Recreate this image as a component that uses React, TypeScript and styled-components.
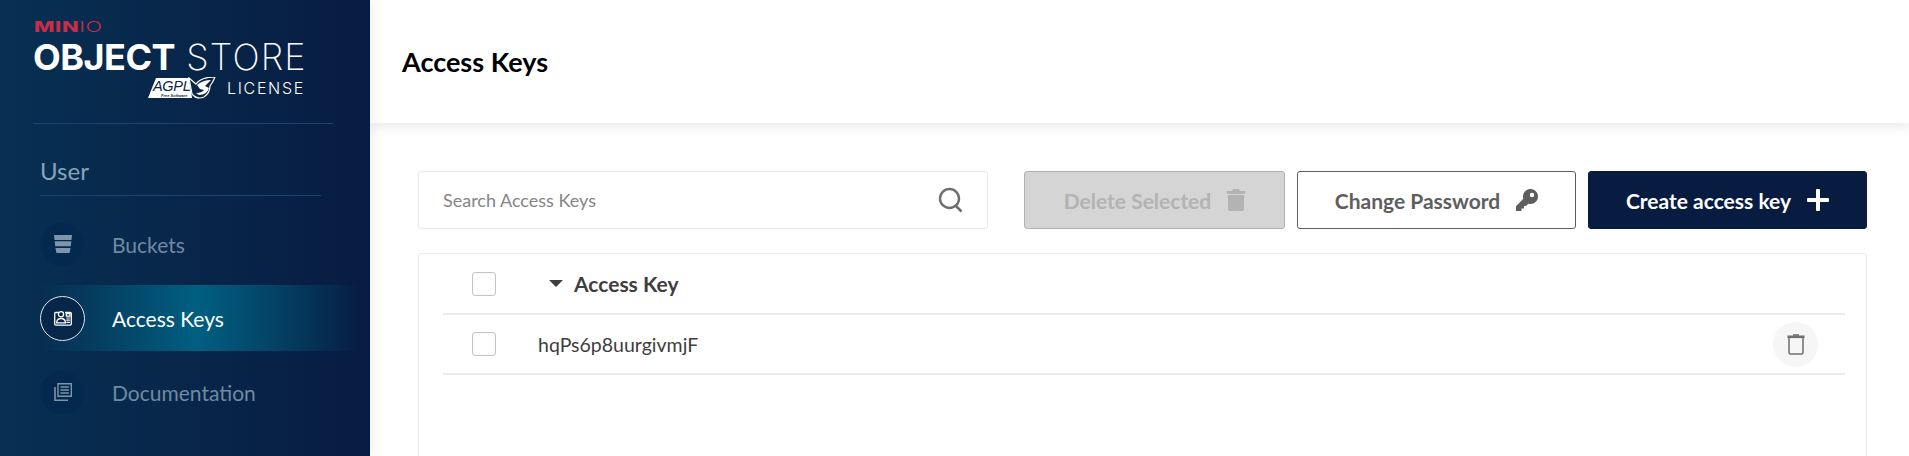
import React from 'react'
import styled, { createGlobalStyle } from 'styled-components'

const GlobalStyle = createGlobalStyle`
    html, body {
        margin: 0;
        height: 100%;
        overflow: hidden;
        background: #fff;
    }
    body {
        font-family: 'Lato', 'Liberation Sans', sans-serif;
    }
`
const Page = styled.div`
    display: flex;
    height: 456px;
    overflow: hidden;
`
const Sidebar = styled.aside`
    width: 370px;
    flex-shrink: 0;
    background: linear-gradient(90deg, #073052 0%, #081c42 100%);
    box-shadow: 0 0 12px rgba(0, 0, 0, 0.1);
    z-index: 2;
`
const LogoBlock = styled.div`
    height: 124px;
    box-sizing: border-box;
    margin: 0 37px 0 33px;
    padding-top: 20px;
    border-bottom: 1px solid #1c4670;
`
const MinioMark = styled.div`
    height: 14px;
    margin-left: 1px;
    font-family: 'Inter', sans-serif;
    font-size: 14px;
    line-height: 14px;
    font-weight: 800;
    letter-spacing: 0.4px;
    color: #c72c48;
    transform: scaleX(1.55);
    transform-origin: left center;
    span {
        font-weight: 300;
    }
`
const ProductName = styled.div`
    margin-top: 3px;
    font-family: 'Inter', sans-serif;
    font-size: 36px;
    line-height: 40px;
    font-weight: 700;
    color: #fff;
    white-space: nowrap;
    letter-spacing: -0.5px;
    span {
        margin-left: 11px;
        font-weight: 200;
        letter-spacing: 1.2px;
    }
`
const LicenseRow = styled.div`
    display: flex;
    align-items: center;
    justify-content: flex-end;
    gap: 11px;
    width: 272px;
`
const LicenseText = styled.span`
    font-family: 'Inter', sans-serif;
    font-size: 16px;
    letter-spacing: 1.7px;
    font-weight: 300;
    color: #fff;
`
const SectionTitle = styled.div`
    margin: 31px 49px 0 40px;
    height: 40px;
    border-bottom: 1px solid #1c4670;
    font-size: 24px;
    line-height: 32px;
    color: #87a3b9;
`
const MenuList = styled.div`
    display: flex;
    flex-direction: column;
    gap: 8px;
    margin-top: 15px;
`
const MenuItem = styled.div<{ $active?: boolean }>`
    display: flex;
    align-items: center;
    gap: 27px;
    height: 66px;
    margin-left: 40px;
    margin-right: 10px;
    font-size: 21px;
    color: ${(p) => (p.$active ? '#fff' : '#6f8aa3')};
    background: ${(p) =>
        p.$active
            ? 'linear-gradient(90deg, rgba(0,95,129,0) 0%, #005f81 49%, rgba(0,95,129,0) 100%)'
            : 'none'};
`
const IconCircle = styled.span<{ $active?: boolean }>`
    width: 45px;
    height: 45px;
    box-sizing: border-box;
    flex-shrink: 0;
    display: flex;
    align-items: center;
    justify-content: center;
    border-radius: 50%;
    border: 1px solid ${(p) => (p.$active ? '#dfe6ec' : '#0a2a52')};
    background: ${(p) => (p.$active ? '#06274a' : '#04294e')};
    color: ${(p) => (p.$active ? '#fff' : '#7d94ab')};
`
const Main = styled.main`
    flex: 1;
    min-width: 0;
    display: flex;
    flex-direction: column;
`
const Header = styled.header`
    height: 123px;
    flex-shrink: 0;
    display: flex;
    align-items: center;
    padding-left: 32px;
    box-sizing: border-box;
    background: #fff;
    box-shadow: 0 3px 12px rgba(0, 0, 0, 0.1);
    z-index: 1;
`
const Title = styled.h1`
    margin: 0;
    font-size: 27px;
    font-weight: 700;
    color: #000;
`
const Content = styled.div`
    padding: 48px 42px 0 48px;
`
const Toolbar = styled.div`
    display: flex;
    align-items: flex-start;
    height: 58px;
`
const Search = styled.div`
    width: 570px;
    height: 58px;
    box-sizing: border-box;
    margin-right: 36px;
    display: flex;
    align-items: center;
    justify-content: space-between;
    padding: 0 23px 0 24px;
    border: 1px solid #eaeaea;
    border-radius: 3px;
    font-size: 18px;
    color: #858585;
`
const Button = styled.button<{ $kind: 'disabled' | 'outline' | 'primary' }>`
    height: 58px;
    box-sizing: border-box;
    display: flex;
    align-items: center;
    justify-content: center;
    gap: 16px;
    margin-right: 12px;
    padding: 0;
    font-family: inherit;
    font-size: 21px;
    font-weight: 700;
    border-radius: 3px;
    width: ${(p) => (p.$kind === 'disabled' ? '261px' : '279px')};
    color: ${(p) =>
        p.$kind === 'disabled'
            ? '#b3b3b3'
            : p.$kind === 'outline'
              ? '#5e5e5e'
              : '#fff'};
    background: ${(p) =>
        p.$kind === 'disabled'
            ? '#d4d5d4'
            : p.$kind === 'outline'
              ? '#fff'
              : '#081c42'};
    border: 1px solid
        ${(p) =>
            p.$kind === 'disabled'
                ? '#b3b3b3'
                : p.$kind === 'outline'
                  ? '#5e5e5e'
                  : '#081c42'};
    &:last-child {
        margin-right: 0;
    }
`
const Card = styled.div`
    margin-top: 24px;
    height: 420px;
    box-sizing: border-box;
    padding: 0 21px 0 24px;
    border: 1px solid #eaeaea;
    border-radius: 3px;
`
const Row = styled.div`
    height: 60px;
    box-sizing: border-box;
    display: flex;
    align-items: center;
    padding: 0 27px 0 29px;
    border-bottom: 2px solid #eaeaea;
    &:first-child {
        height: 61px;
    }
`
const Check = styled.span`
    width: 24px;
    height: 24px;
    box-sizing: border-box;
    flex-shrink: 0;
    border: 1px solid #c4c4c4;
    border-radius: 3px;
    background: #fff;
    box-shadow: inset 0 0 2px rgba(0, 0, 0, 0.08);
`
const SortHead = styled.div`
    display: flex;
    align-items: center;
    gap: 11px;
    margin-left: 53px;
    font-size: 21px;
    font-weight: 700;
    color: #3e3e3e;
`
const Caret = styled.span`
    width: 0;
    height: 0;
    border-left: 7.5px solid transparent;
    border-right: 7.5px solid transparent;
    border-top: 7px solid #3e3e3e;
`
const KeyCell = styled.div`
    flex: 1;
    margin-left: 42px;
    font-size: 19.5px;
    color: #3e3e3e;
`
const RowDelete = styled.button`
    width: 45px;
    height: 45px;
    padding: 0;
    border: none;
    border-radius: 50%;
    display: flex;
    align-items: center;
    justify-content: center;
    background: #f6f6f6;
    color: #6f6f6f;
`

const AgplBadge = () => (
    <svg width="70" height="22" viewBox="0 0 68 22">
        <path d="M9 1H42L45 21H1Z" fill="#fff" />
        <path
            d="M42 1 L45 17 Q50 23 57 20 Q63 16 63 9 Q66 5 68 0 Q54 0 49 7 Z"
            fill="#0a2548"
            stroke="#fff"
            strokeWidth="1.2"
        />
        <path
            d="M50 8 Q56 3 64 3 L58 9 L62 11 Q60 18 52 18 L49 16 Q55 16 57 13 L53 12Z"
            fill="#fff"
        />
        <text
            x="6"
            y="14"
            fontFamily="'Liberation Sans', sans-serif"
            fontStyle="italic"
            fontSize="14.5"
            letterSpacing="-0.3"
            fill="#0a2548"
        >
            AGPL
        </text>
        <text
            x="14"
            y="19.5"
            fontFamily="'Liberation Sans', sans-serif"
            fontStyle="italic"
            fontWeight="700"
            fontSize="4"
            fill="#0a2548"
        >
            Free Software
        </text>
    </svg>
)

const BucketIcon = () => (
    <svg width="18" height="18" viewBox="0 0 18 18" fill="currentColor">
        <path d="M0 0H18L17.5 5H.5Z" />
        <path d="M.7 6.300H17.300L16.800 11.200H1.200Z" />
        <path d="M1.500 13H16.500L15.800 17.300Q15.700 18 15 18H3Q2.300 18 2.200 17.300Z" />
    </svg>
)

const IdIcon = () => (
    <svg width="18" height="16" viewBox="0 0 18 16" fill="none">
        <path
            d="M5 2.5H1.8C1.2 2.5.7 3 .7 3.6V14c0 .6.5 1.1 1.1 1.1h14.4c.6 0 1.1-.5 1.1-1.1V3.6c0-.6-.5-1.1-1.1-1.1H11"
            stroke="currentColor"
            strokeWidth="1.3"
        />
        <circle cx="7" cy="4.2" r="2.6" stroke="currentColor" strokeWidth="1.3" />
        <path
            d="M2.6 12.9c0-3 2-4.4 4.4-4.4s4.4 1.4 4.4 4.4Z"
            stroke="currentColor"
            strokeWidth="1.3"
        />
        <path
            d="M12.3 3.6h3.6v2.6h-3.6ZM12.3 8h3.6M12.3 10.2h3.6M12.3 12.4h3.6"
            stroke="currentColor"
            strokeWidth="1.2"
        />
    </svg>
)

const DocsIcon = () => (
    <svg width="18" height="18" viewBox="0 0 18 18" fill="none" stroke="currentColor">
        <path d="M4 .7h13.3v12.6H4Z" strokeWidth="1.4" />
        <path d="M1 4v13.3h13" strokeWidth="1.6" />
        <path d="M6.5 4h8.3M6.5 7h8.3M6.5 10h8.3" strokeWidth="1.4" />
    </svg>
)

const SearchIcon = () => (
    <svg width="26" height="26" viewBox="0 0 26 26" fill="none" stroke="#6f6f6f">
        <circle cx="11.5" cy="11.5" r="9.5" strokeWidth="2.4" />
        <path d="M17 18l6.5 6.5" strokeWidth="2.6" />
    </svg>
)

const TrashFilled = () => (
    <svg width="18" height="22" viewBox="0 0 18 22" fill="currentColor">
        <path d="M6 0h6l1 2h5v3H0V2h5Z" />
        <path d="M1 6h16v14a2 2 0 0 1-2 2H3a2 2 0 0 1-2-2Z" />
    </svg>
)

const KeyIcon = () => (
    <svg width="22" height="22" viewBox="0 0 22 22" fill="currentColor">
        <path
            fillRule="evenodd"
            d="M14.500 0C18.600 0 22 3.400 22 7.500S18.600 15 14.500 15c-.8 0-1.500-.1-2.200-.3L10 17H8v2.500H5.500V22H0v-4.800l7.300-7.400C7.100 9.100 7 8.300 7 7.500 7 3.400 10.400 0 14.500 0ZM16 3.800a2.200 2.200 0 1 0 0 4.400 2.200 2.200 0 0 0 0-4.400Z"
        />
    </svg>
)

const PlusIcon = () => (
    <svg width="22" height="22" viewBox="0 0 22 22" fill="currentColor">
        <rect x="9" y="0" width="4" height="22" rx="1" />
        <rect x="0" y="9" width="22" height="4" rx="1" />
    </svg>
)

const TrashOutline = () => (
    <svg width="18" height="21" viewBox="0 0 18 21" fill="none" stroke="currentColor">
        <path d="M6 1h6" strokeWidth="1.600" />
        <path d="M.500 2.800h17" strokeWidth="2.600" />
        <path d="M2 4v14.500c0 .8.600 1.500 1.500 1.500h11c.9 0 1.500-.7 1.500-1.500V4" strokeWidth="1.500" />
    </svg>
)

export default function App() {
    return (
        <Page>
            <GlobalStyle />
            <Sidebar>
                <LogoBlock>
                    <MinioMark>
                        MIN<span>IO</span>
                    </MinioMark>
                    <ProductName>
                        OBJECT<span>STORE</span>
                    </ProductName>
                    <LicenseRow>
                        <AgplBadge />
                        <LicenseText>LICENSE</LicenseText>
                    </LicenseRow>
                </LogoBlock>
                <SectionTitle>User</SectionTitle>
                <MenuList>
                    <MenuItem>
                        <IconCircle>
                            <BucketIcon />
                        </IconCircle>
                        Buckets
                    </MenuItem>
                    <MenuItem $active>
                        <IconCircle $active>
                            <IdIcon />
                        </IconCircle>
                        Access Keys
                    </MenuItem>
                    <MenuItem>
                        <IconCircle>
                            <DocsIcon />
                        </IconCircle>
                        Documentation
                    </MenuItem>
                </MenuList>
            </Sidebar>
            <Main>
                <Header>
                    <Title>Access Keys</Title>
                </Header>
                <Content>
                    <Toolbar>
                        <Search>
                            Search Access Keys
                            <SearchIcon />
                        </Search>
                        <Button $kind="disabled">
                            Delete Selected
                            <TrashFilled />
                        </Button>
                        <Button $kind="outline">
                            Change Password
                            <KeyIcon />
                        </Button>
                        <Button $kind="primary">
                            Create access key
                            <PlusIcon />
                        </Button>
                    </Toolbar>
                    <Card>
                        <Row>
                            <Check />
                            <SortHead>
                                <Caret />
                                Access Key
                            </SortHead>
                        </Row>
                        <Row>
                            <Check />
                            <KeyCell>hqPs6p8uurgivmjF</KeyCell>
                            <RowDelete>
                                <TrashOutline />
                            </RowDelete>
                        </Row>
                    </Card>
                </Content>
            </Main>
        </Page>
    )
}
